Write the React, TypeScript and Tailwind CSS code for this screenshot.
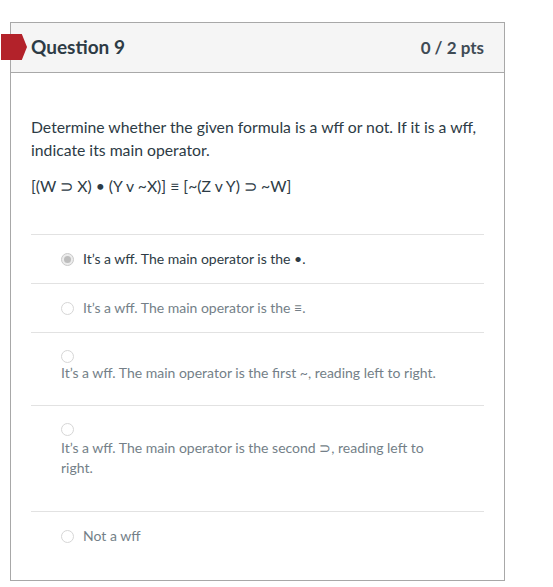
const answers = [
  { text: 'It’s a wff. The main operator is the •.', selected: true, stacked: false },
  { text: 'It’s a wff. The main operator is the ≡.', selected: false, stacked: false },
  { text: 'It’s a wff. The main operator is the first ~, reading left to right.', selected: false, stacked: true },
  { text: 'It’s a wff. The main operator is the second ⊃, reading left to right.', selected: false, stacked: true },
  { text: 'Not a wff', selected: false, stacked: false },
]

function Radio({ selected }: { selected: boolean }) {
  if (selected) {
    return (
      <span className="flex h-[13px] w-[13px] shrink-0 items-center justify-center rounded-full border border-[#c9c9c9] bg-[#ececec]">
        <span className="h-[7px] w-[7px] rounded-full bg-[#bdbdbd]" />
      </span>
    )
  }
  return <span className="block h-[13px] w-[13px] shrink-0 rounded-full border border-[#d6d6d6] bg-white" />
}

export default function App() {
  return (
    <div className="min-h-[587px] bg-white pt-[22px] pl-[10px] font-['Lato','Open_Sans',sans-serif] text-[#2d3b45]">
      <div className="relative w-[495px] border border-[#a8a8a8]">
        <div className="absolute left-[-10px] top-[11px] h-[26px] w-[26px] bg-[#b3222a] [clip-path:polygon(0_0,80%_0,100%_50%,80%_100%,0_100%)]" />
        <div className="flex h-[50px] items-center justify-between border-b border-[#a8a8a8] bg-[#f5f5f5] px-5">
          <h2 className="text-[19px] font-bold">Question 9</h2>
          <span className="text-[17px] font-bold text-[#3f4b55]">0 / 2 pts</span>
        </div>
        <div className="px-5 pt-[42px] pb-[20px]">
          <p className="text-[15.75px] leading-[23px]">
            Determine whether the given formula is a wff or not. If it is a wff, indicate its main operator.
          </p>
          <p className="mt-[13px] text-[15.75px] leading-[23px]">[(W ⊃ X) • (Y v ~X)] ≡ [~(Z v Y) ⊃ ~W]</p>
          <div className="mt-[37px] flex flex-col">
            {answers.map((a, i) => (
              <div key={i} className="border-t border-[#e2e2e2]">
                {a.stacked ? (
                  <div className={i === 2 ? 'pl-[30px] pt-[17px] pb-[22px]' : 'pl-[30px] pt-[17px] pb-[33px]'}>
                    <Radio selected={a.selected} />
                    <div className={i === 3 ? 'mt-[2px] w-[385px] text-[14px] leading-[20px] text-[#747f88]' : 'w-[385px] text-[14px] leading-[20px] text-[#747f88]'}>
                      {a.text}
                    </div>
                  </div>
                ) : (
                  <div className="flex items-center gap-[9px] pl-[30px] py-[14px]">
                    <Radio selected={a.selected} />
                    <span className={a.selected ? 'text-[14px] leading-[20px] text-[#2d3b45]' : 'text-[14px] leading-[20px] text-[#747f88]'}>
                      {a.text}
                    </span>
                  </div>
                )}
              </div>
            ))}
          </div>
        </div>
      </div>
    </div>
  )
}
